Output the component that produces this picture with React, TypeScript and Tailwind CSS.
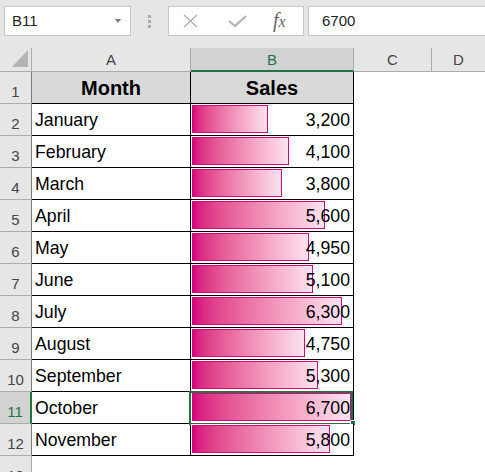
const data: [string, number][] = [
  ['January', 3200],
  ['February', 4100],
  ['March', 3800],
  ['April', 5600],
  ['May', 4950],
  ['June', 5100],
  ['July', 6300],
  ['August', 4750],
  ['September', 5300],
  ['October', 6700],
  ['November', 5800],
];

const MAX = 6700;
const BAR_MAX = 159;

function RowHeader({ n, selected, inTable }: { n: number; selected?: boolean; inTable?: boolean }) {
  return (
    <div
      className={`w-[32px] shrink-0 flex items-end justify-center pb-[3px] text-[15px] leading-[17px] border-b border-[#ababab] ${
        selected
          ? 'bg-[#d2d2d2] text-[#217346] border-r-2 border-r-[#217346]'
          : `bg-[#e6e6e6] text-[#444] border-r ${inTable ? 'border-r-[#7a7a7a]' : 'border-r-[#ababab]'}`
      }`}
    >
      {n}
    </div>
  );
}

export default function App() {
  return (
    <div className="w-[485px] h-[472px] overflow-hidden bg-[#e6e6e6] font-['Liberation_Sans',Arial,sans-serif] text-black">
      {/* Formula bar */}
      <div className="h-[48px] flex items-start pt-[6px] pl-[4px]">
        <div className="w-[127px] h-[30px] shrink-0 bg-white border border-[#c6c6c6] flex items-center justify-between pl-[7px] pr-[9px] text-[15px] text-[#222]">
          <span>B11</span>
          <span className="w-0 h-0 border-l-[3px] border-r-[3px] border-t-[4px] border-l-transparent border-r-transparent border-t-[#777]" />
        </div>
        <div className="w-[37px] h-[30px] shrink-0 flex flex-col items-center justify-center gap-[2px]">
          <span className="w-[3px] h-[3px] bg-[#aaa]" />
          <span className="w-[3px] h-[3px] bg-[#aaa]" />
          <span className="w-[3px] h-[3px] bg-[#aaa]" />
        </div>
        <div className="w-[136px] h-[30px] shrink-0 bg-white border border-[#c6c6c6] flex items-center pl-[14px]">
          <svg width="15" height="14" viewBox="0 0 15 14" className="shrink-0">
            <path d="M1 1 L14 13 M14 1 L1 13" stroke="#adadad" strokeWidth="1.3" fill="none" />
          </svg>
          <svg width="19" height="12" viewBox="0 0 19 12" className="shrink-0 ml-[30px]">
            <path d="M1 6 L7 11 L18 1" stroke="#b4b4b4" strokeWidth="2.2" fill="none" />
          </svg>
          <span className="ml-[26px] italic font-['Liberation_Serif',serif] text-[20px] leading-[20px] text-[#666]">
            f<span className="text-[16px]">x</span>
          </span>
        </div>
        <div className="flex-1 h-[30px] ml-[4px] bg-white border border-r-0 border-[#c6c6c6] flex items-center pl-[13px] text-[15px] text-[#222]">
          6700
        </div>
      </div>

      {/* Column headers */}
      <div className="flex h-[24px] text-[15px] leading-[17px]">
        <div className="w-[32px] shrink-0 relative border-r border-b border-[#ababab]">
          <svg width="16" height="17" viewBox="0 0 16 17" className="absolute left-[12px] top-[2px]">
            <polygon points="16,0 16,17 0,17" fill="#b4b4b4" />
          </svg>
        </div>
        <div className="w-[159px] shrink-0 flex items-center justify-center text-[#444] border-r border-b border-[#ababab]">A</div>
        <div className="w-[163px] shrink-0 flex items-center justify-center bg-[#d2d2d2] text-[#217346] border-r border-r-[#ababab] border-b-2 border-b-[#217346]">
          B
        </div>
        <div className="w-[78px] shrink-0 flex items-center justify-center text-[#444] border-r border-b border-[#ababab]">C</div>
        <div className="flex-1 flex items-center justify-center text-[#444] border-b border-[#ababab]">D</div>
      </div>

      {/* Row 1: headers */}
      <div className="flex h-[32px]">
        <RowHeader n={1} inTable />
        <div className="w-[159px] shrink-0 bg-[#d9d9d9] border-r border-b border-black flex items-end justify-center pb-[4px] text-[20px] leading-[22px] font-bold">
          Month
        </div>
        <div className="w-[163px] shrink-0 bg-[#d9d9d9] border-r border-b border-black flex items-end justify-center pb-[4px] text-[20px] leading-[22px] font-bold">
          Sales
        </div>
        <div className="flex-1 bg-white" />
      </div>

      {data.map(([month, sales], i) => {
        const selected = i === 9;
        const width = Math.round((sales / MAX) * BAR_MAX);
        return (
          <div key={month} className="flex h-[32px]">
            <RowHeader n={i + 2} selected={selected} inTable />
            <div className="w-[159px] shrink-0 bg-white border-r border-b border-black flex items-end pl-[3px] pb-[5px] text-[17.7px] leading-[20px]">
              {month}
            </div>
            <div className="w-[163px] shrink-0 relative bg-white border-r border-b border-black flex items-end justify-end pr-[3px] pb-[5px] text-[17.7px] leading-[20px]">
              <div
                className="absolute left-[1px] top-[1px] h-[28px] border border-[#d6007b] bg-linear-to-r from-[#d6007b] to-[#fbe3f0]"
                style={{ width }}
              />
              <span className="relative">{sales.toLocaleString('en-US')}</span>
              {selected && (
                <>
                  <div className="absolute -left-[2px] -top-[1px] right-0 -bottom-[2px] border-2 border-[#217346]" />
                  <div className="absolute -right-[3px] -bottom-[3px] w-[6px] h-[6px] bg-[#217346] border border-white" />
                </>
              )}
            </div>
            <div className="flex-1 bg-white" />
          </div>
        );
      })}

      {/* Row 13 */}
      <div className="flex h-[32px]">
        <RowHeader n={13} />
        <div className="flex-1 bg-white" />
      </div>
    </div>
  );
}
